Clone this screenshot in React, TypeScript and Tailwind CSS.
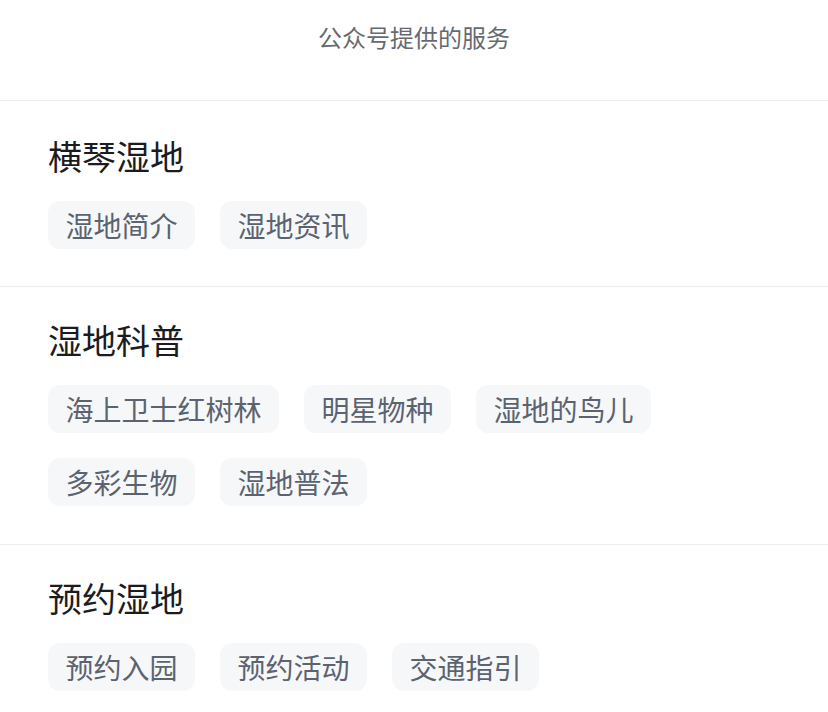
const sections = [
  { title: "横琴湿地", items: ["湿地简介", "湿地资讯"], pad: "pt-[33px] pb-[37px]" },
  {
    title: "湿地科普",
    items: ["海上卫士红树林", "明星物种", "湿地的鸟儿", "多彩生物", "湿地普法"],
    pad: "pt-[31px] pb-[38px]",
  },
  { title: "预约湿地", items: ["预约入园", "预约活动", "交通指引"], pad: "pt-[31px]" },
];

const font = { fontFamily: '"Noto Sans CJK SC", "Noto Sans", sans-serif' };

export default function App() {
  return (
    <div className="min-h-screen w-[828px] bg-white" style={font}>
      <div className="flex h-[101px] justify-center border-b border-[#ececec] pt-[20px]">
        <span className="text-[24px] leading-[34px] text-[#666a70]">公众号提供的服务</span>
      </div>

      {sections.map((s, i) => (
        <div
          key={s.title}
          className={
            i < sections.length - 1
              ? `border-b border-[#ececec] px-12 ${s.pad}`
              : `px-12 ${s.pad}`
          }
        >
          <h2 className="text-[34px] leading-[44px] text-[#1c1c1e]">{s.title}</h2>
          <div className="mt-[23px] flex w-[620px] flex-wrap gap-x-[25px] gap-y-[25px]">
            {s.items.map((it) => (
              <span
                key={it}
                className="flex h-[48px] items-center rounded-[12px] bg-[#f6f7f9] px-[17.5px] text-[28px] text-[#5b6370]"
              >
                {it}
              </span>
            ))}
          </div>
        </div>
      ))}
    </div>
  );
}
